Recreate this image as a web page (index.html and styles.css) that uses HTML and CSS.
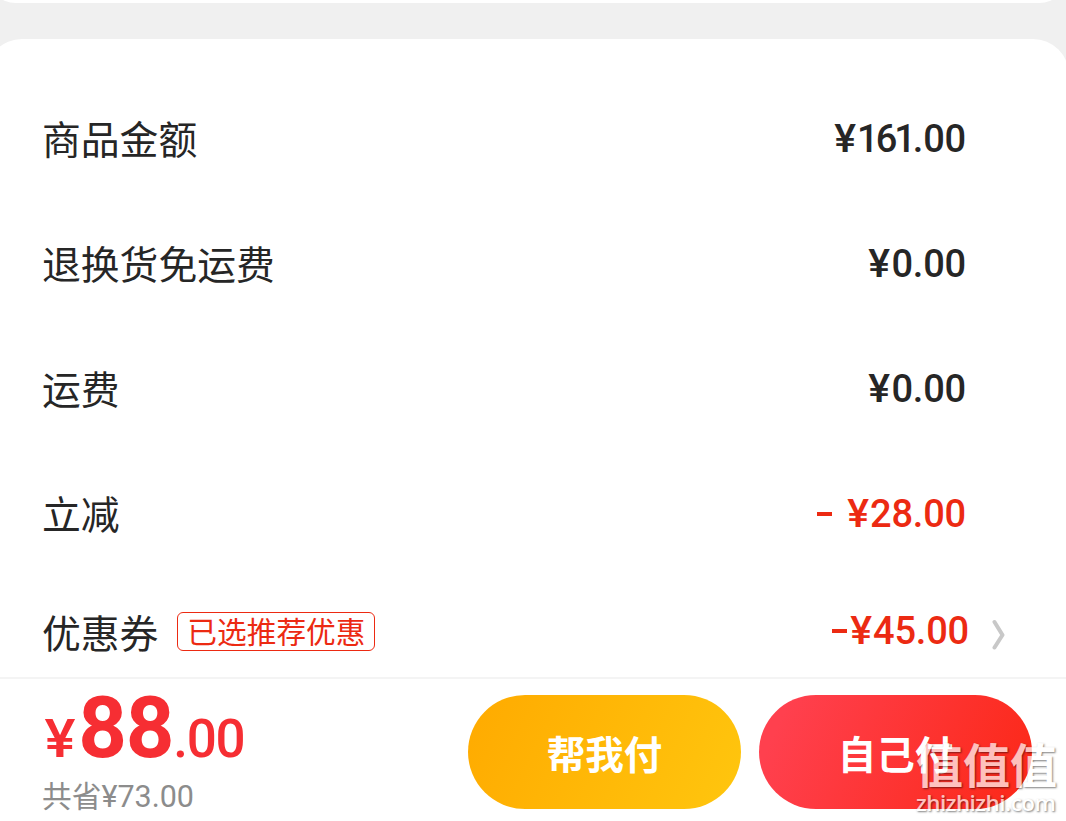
FILE: index.html
```
<!DOCTYPE html>
<html lang="zh-CN">
<head>
<meta charset="UTF-8">
<meta name="viewport" content="width=device-width, initial-scale=1.0">
<title>确认订单</title>
<link rel="stylesheet" href="styles.css">
</head>
<body>
    <div class="wrapper">
        <div class="prev-card"></div>
        <div class="card">
            <div class="row">
                <span class="label">商品金额</span>
                <span class="price"><span class="sign">¥</span><span class="narrow">161</span>.00</span>
            </div>
            <div class="row">
                <span class="label">退换货免运费</span>
                <span class="price"><span class="sign">¥</span>0.00</span>
            </div>
            <div class="row">
                <span class="label">运费</span>
                <span class="price"><span class="sign">¥</span>0.00</span>
            </div>
            <div class="row">
                <span class="label">立减</span>
                <span class="price red"><span class="minus gap"></span><span class="sign">¥</span>28.00</span>
            </div>
            <div class="row coupon">
                <span class="label">优惠券</span>
                <span class="tag">已选推荐优惠</span>
                <span class="price red"><span class="minus"></span><span class="sign">¥</span>45.00</span>
                <svg class="arrow" width="14" height="32" viewBox="0 0 14 32">
                    <path d="M2.5 3 L10.5 16 L2.5 28.5" fill="none" stroke="#c8c8c8" stroke-width="4" stroke-linecap="round" stroke-linejoin="round"/>
                </svg>
            </div>
        </div>
        <div class="footer">
            <div class="total-area">
                <div class="total"><span class="yen">¥</span><span class="big">88</span><span class="cents">.00</span></div>
                <div class="saved">共省<span class="saved-num">¥73.00</span></div>
            </div>
            <button class="btn yellow">帮我付</button>
            <button class="btn pay">自己付</button>
        </div>
        <div class="watermark">
            <div class="mark">值值值</div>
            <div class="site">zhizhizhi.com</div>
        </div>
    </div>
</body>
</html>
```
FILE: styles.css
```
*{
    box-sizing: border-box;
}
body{
    margin: 0;
    background: #f0f0f0;
    font-family: "Noto Sans CJK SC", sans-serif;
    color: #262626;
}
.wrapper{
    position: relative;
    width: 1066px;
    height: 821px;
    overflow: hidden;
    display: flex;
    flex-direction: column;
}
.prev-card{
    height: 60px;
    margin: -57px -3px 36px -14px;
    background: #fff;
    border-radius: 36px;
    flex: none;
}
.card{
    height: 638px;
    margin: 0 -3px 0 -14px;
    padding: 38px 103px 0 56px;
    background: #fff;
    border-radius: 36px 36px 0 0;
    flex: none;
}
.row{
    height: 125px;
    display: flex;
    align-items: center;
}
.label{
    margin-top: -6px;
    font-size: 38.8px;
    line-height: 56px;
}
.price{
    margin-left: auto;
    margin-top: -2px;
    display: flex;
    align-items: center;
    font-family: Roboto, sans-serif;
    font-weight: 500;
    font-size: 38px;
    line-height: 44px;
    letter-spacing: -.2px;
}
.sign{
    margin-right: 2px;
    transform: scaleX(1.08);
}
.narrow{
    letter-spacing: -3px;
}
.red{
    color: #ec2a12;
}
.minus{
    width: 15px;
    height: 4px;
    margin-right: 4px;
    background: #ec2a12;
}
.gap{
    margin-right: 16px;
}
.coupon{
    height: 101px;
    padding-top: 12px;
    margin-right: -40px;
}
.coupon .price{
    margin-top: -5px;
}
.tag{
    width: 198px;
    height: 39px;
    margin: -4px 0 0 19px;
    border: 1px solid #ec2a12;
    border-radius: 6px;
    color: #ec2a12;
    font-size: 29.7px;
    line-height: 35px;
    text-align: center;
}
.arrow{
    margin: 3px 0 0 23px;
}
.footer{
    height: 144px;
    padding: 16px 34px 0 42px;
    background: #fff;
    border-top: 2px solid #f4f4f4;
    display: flex;
    flex: none;
}
.total-area{
    margin-right: auto;
}
.total{
    display: flex;
    align-items: baseline;
    height: 82px;
    margin-top: -8px;
    padding-left: 4px;
    color: #f62e33;
    font-family: Roboto, sans-serif;
    font-weight: 500;
    line-height: 82px;
    white-space: nowrap;
}
.yen, .cents{
    font-size: 53px;
}
.yen{
    margin-right: 4px;
    transform: scaleX(1.1);
}
.cents{
    letter-spacing: -1.3px;
}
.big{
    font-size: 85px;
    font-weight: 700;
    letter-spacing: -1.2px;
}
.saved{
    margin-top: 8px;
    color: #8c8c8c;
    font-size: 29.7px;
    line-height: 36px;
}
.saved-num{
    font-family: Roboto, sans-serif;
    font-size: 30.5px;
}
.btn{
    width: 273px;
    height: 114px;
    padding: 0;
    border: 0;
    border-radius: 57px;
    color: #fff;
    font-family: "Noto Sans CJK SC", sans-serif;
    font-size: 38.5px;
    font-weight: 700;
}
.yellow{
    background: linear-gradient(115deg, #ffaa00, #ffc60e);
}
.pay{
    margin-left: 18px;
    background: linear-gradient(115deg, #ff404e 10%, #fc2a1c 90%);
}
/* 右下角水印 */
.watermark{
    position: absolute;
    right: 6px;
    bottom: 5px;
    width: 144px;
    color: #fff;
    text-shadow: 1px 1px 2px rgba(0, 0, 0, .7);
    opacity: .7;
    white-space: nowrap;
}
.mark{
    font-size: 47px;
    font-weight: 700;
    line-height: 55px;
}
.site{
    font-family: "Open Sans", sans-serif;
    font-size: 22.4px;
    font-weight: 600;
    letter-spacing: -.5px;
    line-height: 26px;
}
```
